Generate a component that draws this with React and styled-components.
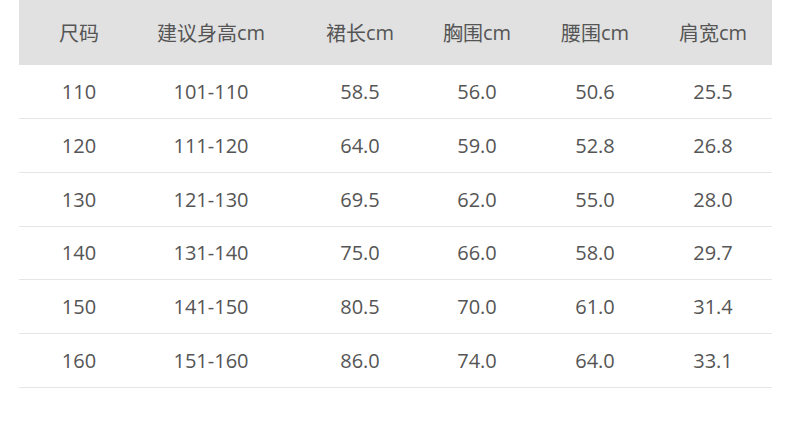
import React from "react";
import styled, { createGlobalStyle } from "styled-components";

const GlobalStyle = createGlobalStyle`
  body {
    margin: 0;
    background: #ffffff;
    font-family: "Open Sans", "Noto Sans CJK SC", sans-serif;
  }
`;

const Page = styled.div`
  width: 790px;
  height: 431px;
  padding: 0 18px 0 19px;
  box-sizing: border-box;
  background: #ffffff;
`;

const Grid = styled.div`
  display: grid;
  grid-template-columns: 101px 182px 116px 118px 118px 118px;
  width: 753px;
`;

const Row = styled.div`
  display: contents;
`;

const Cell = styled.div`
  display: flex;
  align-items: center;
  justify-content: center;
  height: ${(p) => (p.header ? "65.2px" : "52.8px")};
  background: ${(p) => (p.header ? "#e1e1e1" : "transparent")};
  border-bottom: ${(p) => (p.header ? "none" : "1px solid #e6e6e6")};
  color: #555555;
  font-size: 20px;
  font-family: ${(p) =>
    p.header
      ? `"Noto Sans CJK SC", "Open Sans", sans-serif`
      : `"Open Sans", "Noto Sans", sans-serif`};
  font-weight: 400;
  white-space: nowrap;

  &:nth-child(6n + 1) {
    padding-left: 19px;
  }

  & .cm {
    font-family: "Open Sans", sans-serif;
  }
`;

const headers = [
  ["尺码", ""],
  ["建议身高", "cm"],
  ["裙长", "cm"],
  ["胸围", "cm"],
  ["腰围", "cm"],
  ["肩宽", "cm"],
];

const rows = [
  ["110", "101-110", "58.5", "56.0", "50.6", "25.5"],
  ["120", "111-120", "64.0", "59.0", "52.8", "26.8"],
  ["130", "121-130", "69.5", "62.0", "55.0", "28.0"],
  ["140", "131-140", "75.0", "66.0", "58.0", "29.7"],
  ["150", "141-150", "80.5", "70.0", "61.0", "31.4"],
  ["160", "151-160", "86.0", "74.0", "64.0", "33.1"],
];

export default function App() {
  return (
    <>
      <GlobalStyle />
      <Page>
        <Grid>
          {headers.map(([zh, unit], i) => (
            <Cell header key={"h" + i}>
              {zh}
              {unit && <span className="cm">{unit}</span>}
            </Cell>
          ))}
          {rows.map((r, ri) => (
            <Row key={ri}>
              {r.map((v, ci) => (
                <Cell key={ci}>{v}</Cell>
              ))}
            </Row>
          ))}
        </Grid>
      </Page>
    </>
  );
}
